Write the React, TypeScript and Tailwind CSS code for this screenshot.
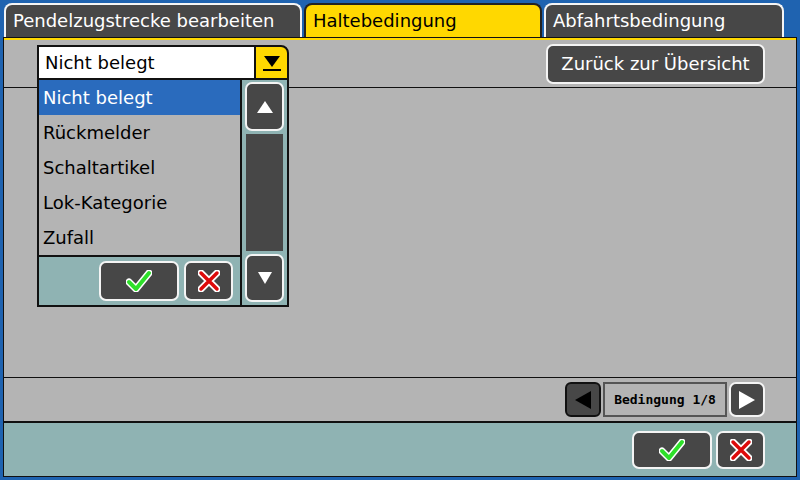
import React from "react";

const DARK = "bg-[#474747]";

function Check({ w = 26, h = 22 }: { w?: number; h?: number }) {
  return (
    <svg width={w} height={h} viewBox="0 0 26 22">
      <path d="M3 12 L10 19 L23 3" fill="none" stroke="#fff" strokeWidth="7" strokeLinecap="round" strokeLinejoin="round" />
      <path d="M3 12 L10 19 L23 3" fill="none" stroke="#2ee02a" strokeWidth="4" strokeLinecap="round" strokeLinejoin="round" />
    </svg>
  );
}

function Cross() {
  return (
    <svg width="22" height="22" viewBox="0 0 22 22">
      <path d="M3 3 L19 19 M19 3 L3 19" fill="none" stroke="#fff" strokeWidth="7" strokeLinecap="round" />
      <path d="M3 3 L19 19 M19 3 L3 19" fill="none" stroke="#dd0a0a" strokeWidth="3.5" strokeLinecap="round" />
    </svg>
  );
}

function Btn({ className, children }: { className: string; children: React.ReactNode }) {
  return (
    <div className={`${DARK} border-2 border-[#f4f4f4] rounded-[7px] flex items-center justify-center ${className}`}>
      {children}
    </div>
  );
}

function Tab({ label, active, className }: { label: string; active?: boolean; className: string }) {
  return (
    <div
      className={`h-[34px] rounded-t-[8px] border-2 border-b-0 pl-[7px] pt-[5px] text-[18px] leading-[22px] ${
        active ? "bg-[#ffd800] border-[#222] text-black" : "bg-[#474747] border-[#f4f4f4] text-white"
      } ${className}`}
    >
      {label}
    </div>
  );
}

const items = ["Nicht belegt", "Rückmelder", "Schaltartikel", "Lok-Kategorie", "Zufall"];

function Dropdown() {
  return (
    <div className="absolute left-[33px] top-[7px] w-[252px] flex flex-col">
      <div className="h-[35px] flex">
        <div className="flex-1 bg-white border-2 border-[#111] border-r-0 pl-[6px] text-[18px] leading-[31px] text-black">
          Nicht belegt
        </div>
        <div className="w-[35px] bg-[#ffd800] border-2 border-[#111] rounded-tr-[8px] flex items-center justify-center">
          <svg width="18" height="18" viewBox="0 0 18 18">
            <path d="M1 2 H17 L9 13 Z" fill="#000" />
            <rect x="0" y="15" width="18" height="2" fill="#000" />
          </svg>
        </div>
      </div>
      <div className="flex border-2 border-t-0 border-[#111] h-[227px]">
        <div className="w-[201px] flex flex-col">
          {items.map((it, i) => (
            <div
              key={it}
              className={`h-[35px] pl-[4px] text-[18px] leading-[35px] ${
                i === 0 ? "bg-[#2a6bbd] text-white" : "bg-[#b4b4b4] text-black"
              }`}
            >
              {it}
            </div>
          ))}
          <div className="flex-1 bg-[#8fb3b3] border-t-2 border-[#111] flex items-center justify-end gap-[5px] pr-[7px]">
            <Btn className="w-[80px] h-[40px]">
              <Check />
            </Btn>
            <Btn className="w-[49px] h-[40px]">
              <Cross />
            </Btn>
          </div>
        </div>
        <div className="flex-1 bg-[#8fb3b3] border-l-2 border-[#111] flex flex-col px-[3px] pt-[2px] pb-[3px] gap-[3px]">
          <Btn className="h-[49px]">
            <svg width="16" height="12" viewBox="0 0 16 12">
              <path d="M8 0 L16 12 H0 Z" fill="#fff" />
            </svg>
          </Btn>
          <div className={`flex-1 ${DARK} mx-[1px]`} />
          <Btn className="h-[48px]">
            <svg width="14" height="12" viewBox="0 0 14 12">
              <path d="M0 0 H14 L7 12 Z" fill="#fff" />
            </svg>
          </Btn>
        </div>
      </div>
    </div>
  );
}

export default function App() {
  return (
    <div className="w-[800px] h-[480px] bg-[#1f63b0] flex flex-col pt-[3px] px-[3px] pb-[3px] overflow-hidden font-['DejaVu_Sans',sans-serif]">
      <div className="flex gap-[2px] pl-[1px]">
        <Tab label="Pendelzugstrecke bearbeiten" className="w-[298px]" />
        <Tab label="Haltebedingung" active className="w-[238px]" />
        <Tab label="Abfahrtsbedingung" className="w-[240px]" />
      </div>
      <div className="flex-1 relative flex flex-col bg-[#b4b4b4] border border-[#111]">
        <div className="h-[2px] bg-[#ffd800]" />
        <div className="h-[48px] border-b border-[#111] flex items-center justify-end pr-[31px]">
          <Btn className="w-[219px] h-[40px] text-white text-[18px]">Zurück zur Übersicht</Btn>
        </div>
        <div className="flex-1 border-b border-[#111]" />
        <div className="h-[45px] border-b-2 border-[#111] flex items-center justify-end pr-[31px] gap-[2px]">
          <div className={`w-[36px] h-[35px] ${DARK} border-2 border-[#111] rounded-[6px] flex items-center justify-center`}>
            <svg width="16" height="18" viewBox="0 0 16 18">
              <path d="M16 0 V18 L0 9 Z" fill="#000" />
            </svg>
          </div>
          <div className="w-[124px] h-[35px] border-2 border-[#555] bg-[#b4b4b4] flex items-center justify-center font-['DejaVu_Sans_Mono',monospace] font-bold text-[13px] text-black">
            Bedingung 1/8
          </div>
          <Btn className="w-[36px] h-[35px]">
            <svg width="16" height="18" viewBox="0 0 16 18">
              <path d="M0 0 V18 L16 9 Z" fill="#fff" />
            </svg>
          </Btn>
        </div>
        <div className="h-[53px] bg-[#8fb3b3] flex items-center justify-end pr-[31px] gap-[4px]">
          <Btn className="w-[80px] h-[38px]">
            <Check />
          </Btn>
          <Btn className="w-[49px] h-[38px]">
            <Cross />
          </Btn>
        </div>
        <Dropdown />
      </div>
    </div>
  );
}
